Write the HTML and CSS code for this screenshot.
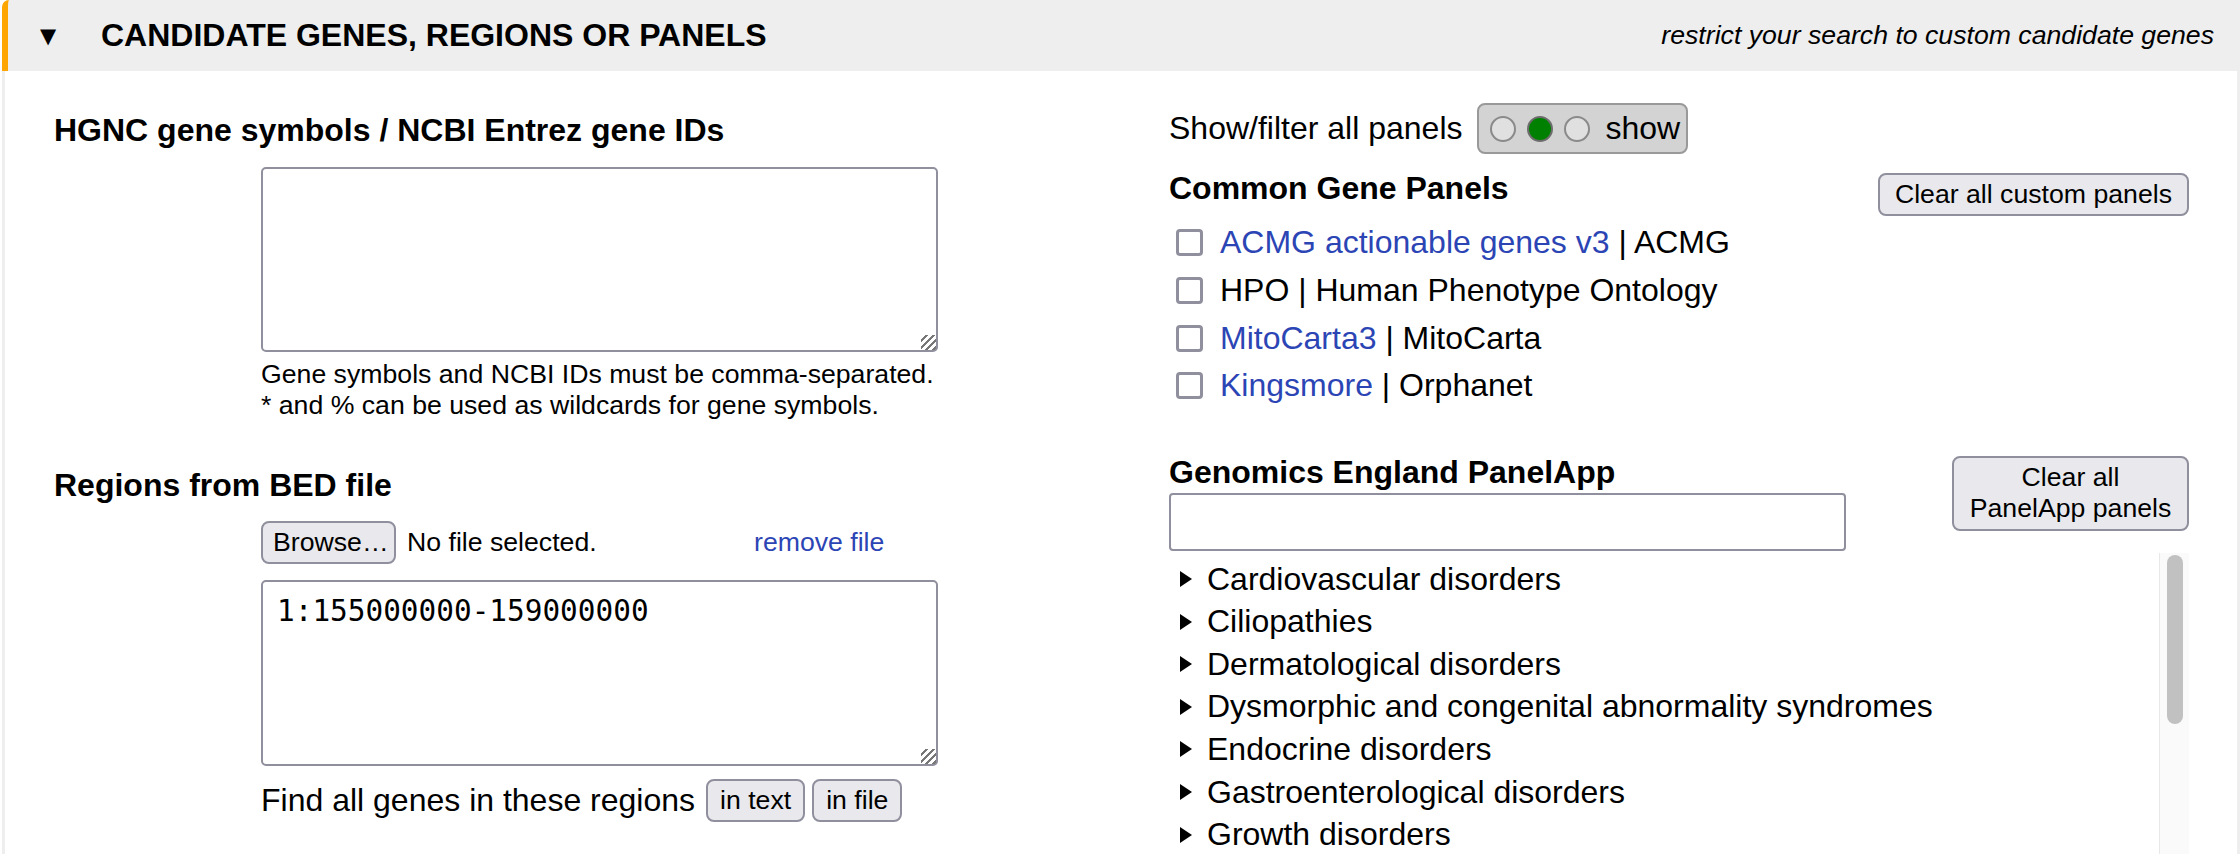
FILE: index.html
```html
<!DOCTYPE html>
<html lang="en">
<head>
<meta charset="utf-8">
<title>Candidate genes</title>
<link rel="stylesheet" href="styles.css">
</head>
<body>
<section class="panel">
  <header class="panel-head">
    <div class="head-left">
      <span class="caret">▼</span>
      <h2 class="head-title">CANDIDATE GENES, REGIONS OR PANELS</h2>
    </div>
    <div class="head-note">restrict your search to custom candidate genes</div>
  </header>
  <div class="panel-body">
    <div class="col-left">
      <h3 class="sub-title first">HGNC gene symbols / NCBI Entrez gene IDs</h3>
      <div class="indent">
        <textarea class="area"></textarea>
        <p class="help">Gene symbols and NCBI IDs must be comma-separated.<br>* and % can be used as wildcards for gene symbols.</p>
      </div>
      <h3 class="sub-title bed">Regions from BED file</h3>
      <div class="indent">
        <div class="file-row">
          <button class="btn">Browse…</button>
          <span class="file-name">No file selected.</span>
          <a class="link remove" href="#">remove file</a>
        </div>
        <textarea class="area mono">1:155000000-159000000</textarea>
        <div class="find-row">
          <span>Find all genes in these regions</span>
          <button class="btn">in text</button>
          <button class="btn">in file</button>
        </div>
      </div>
    </div>
    <div class="col-right">
      <div class="show-row">
        <span>Show/filter all panels</span>
        <div class="toggle">
          <span class="dot"></span>
          <span class="dot on"></span>
          <span class="dot"></span>
          <span class="toggle-label">show</span>
        </div>
      </div>
      <div class="common">
        <div class="common-main">
          <h3 class="sub-title">Common Gene Panels</h3>
          <ul class="checks">
            <li><input type="checkbox" class="chk"><a class="link" href="#">ACMG actionable genes v3</a>&nbsp;| ACMG</li>
            <li><input type="checkbox" class="chk">HPO | Human Phenotype Ontology</li>
            <li><input type="checkbox" class="chk"><a class="link" href="#">MitoCarta3</a>&nbsp;| MitoCarta</li>
            <li><input type="checkbox" class="chk"><a class="link" href="#">Kingsmore</a>&nbsp;| Orphanet</li>
          </ul>
        </div>
        <button class="btn clear-custom">Clear all custom panels</button>
      </div>
      <div class="panelapp">
        <div class="panelapp-main">
          <h3 class="sub-title">Genomics England PanelApp</h3>
          <input type="text" class="search">
        </div>
        <button class="btn clear-pa">Clear all PanelApp panels</button>
      </div>
      <div class="tree-box">
        <ul class="tree">
          <li><span class="tri"></span>Cardiovascular disorders</li>
          <li><span class="tri"></span>Ciliopathies</li>
          <li><span class="tri"></span>Dermatological disorders</li>
          <li><span class="tri"></span>Dysmorphic and congenital abnormality syndromes</li>
          <li><span class="tri"></span>Endocrine disorders</li>
          <li><span class="tri"></span>Gastroenterological disorders</li>
          <li><span class="tri"></span>Growth disorders</li>
        </ul>
        <div class="scrollbar"><div class="thumb"></div></div>
      </div>
    </div>
  </div>
</section>
</body>
</html>
```

FILE: styles.css
```css
html, body {
  margin: 0;
  padding: 0;
  height: 854px;
  overflow: hidden;
  background: #ffffff;
}
body {
  font-family: "Liberation Sans", Arial, sans-serif;
  font-size: 32px;
  color: #000;
}
.panel {
  margin-left: 2px;
}
.panel-head {
  height: 71px;
  box-sizing: border-box;
  background: #eeeeee;
  border-left: 6px solid #ffa500;
  border-top-left-radius: 7px;
  display: flex;
  align-items: center;
  justify-content: space-between;
  padding: 0 26px 0 32px;
}
.head-left {
  display: flex;
  align-items: center;
}
.caret {
  font-family: "DejaVu Sans", sans-serif;
  font-size: 21px;
  width: 61px;
  margin-top: 1px;
}
.head-title {
  margin: 0;
  font-size: 32px;
  font-weight: bold;
  line-height: 37px;
}
.head-note {
  font-style: italic;
  font-size: 26.67px;
}
.panel-body {
  border-left: 3px solid #eeeeee;
  border-right: 3px solid #eeeeee;
  display: grid;
  grid-template-columns: 1115px 1020px;
  padding: 32px 48px 0 49px;
  height: 783px;
  box-sizing: border-box;
}
.sub-title {
  margin: 0;
  font-size: 32px;
  font-weight: bold;
  line-height: 37px;
}
.sub-title.first {
  margin-top: 9px;
}
.sub-title.bed {
  margin-top: 46px;
}
.indent {
  margin-left: 207px;
}
.area {
  display: block;
  box-sizing: border-box;
  width: 677px;
  height: 185px;
  margin: 18px 0 0 0;
  border: 2px solid #8f8f9d;
  border-radius: 5px;
  padding: 12px 16px;
  font-family: "Liberation Sans", sans-serif;
  font-size: 26.67px;
  background: #fff;
  resize: both;
}
.area::-webkit-resizer {
  background: repeating-linear-gradient(135deg, transparent 0 3px, #777 3px 5px);
}
.area.mono {
  margin-top: 16px;
  height: 186px;
  font-family: "DejaVu Sans Mono", monospace;
  font-size: 29.4px;
  line-height: 36px;
  padding: 11px 14px;
  color: #000;
}
.help {
  margin: 7px 0 0 0;
  font-size: 26.67px;
  line-height: 31px;
}
.btn {
  font-family: "Liberation Sans", sans-serif;
  font-size: 26.67px;
  background: #e9e9ed;
  border: 2px solid #8f8f9d;
  border-radius: 8px;
  color: #000;
  padding: 0 10px;
  height: 43px;
  line-height: 37px;
}
.file-row {
  margin-top: 17px;
  display: flex;
  align-items: center;
  height: 43px;
}
.file-row .btn {
  width: 135px;
}
.file-name {
  font-size: 26.67px;
  margin-left: 11px;
  width: 347px;
}
.link {
  color: #2c45b5;
  text-decoration: none;
}
.remove {
  font-size: 26.67px;
}
.find-row {
  margin-top: 13px;
  display: flex;
  align-items: center;
  gap: 7px;
}
.find-row span {
  margin-right: 4px;
}
.find-row .btn {
  height: 43px;
  padding: 0 12px;
}

/* right column */
.show-row {
  display: flex;
  align-items: center;
  height: 51px;
}
.toggle {
  margin-left: 15px;
  box-sizing: border-box;
  height: 51px;
  width: 211px;
  background: #d3d3d3;
  border: 2px solid #999999;
  border-radius: 8px;
  display: flex;
  align-items: center;
  padding-left: 11px;
  gap: 11px;
}
.dot {
  width: 26px;
  height: 26px;
  box-sizing: border-box;
  border-radius: 50%;
  border: 2px solid #8a8a8a;
  background: #e0e0e0;
}
.dot.on {
  background: #008000;
  border-color: #6d6d6d;
}
.toggle-label {
  margin-left: 4px;
}
.common {
  margin-top: 16px;
  display: flex;
  justify-content: space-between;
  align-items: flex-start;
}
.clear-custom {
  margin-top: 3px;
  padding: 0 15px;
}
.checks {
  list-style: none;
  margin: 12px 0 0 0;
  padding: 0;
}
.checks li {
  height: 47.7px;
  display: flex;
  align-items: center;
}
.chk {
  appearance: none;
  -webkit-appearance: none;
  width: 27px;
  height: 27px;
  box-sizing: border-box;
  border: 3px solid #8f8f9d;
  border-radius: 4px;
  margin: 0 17px 0 7px;
  background: #fff;
}
.panelapp {
  margin-top: 44px;
  display: flex;
  justify-content: space-between;
  align-items: flex-start;
}
.search {
  display: block;
  box-sizing: border-box;
  width: 677px;
  height: 58px;
  margin-top: 2px;
  border: 2px solid #8f8f9d;
  border-radius: 4px;
  font-size: 26.67px;
}
.clear-pa {
  width: 237px;
  height: 75px;
  margin-top: 2px;
  line-height: 31px;
  padding: 0 14px;
}
.tree-box {
  margin-top: 2px;
  display: flex;
  height: 301px;
  overflow: hidden;
}
.tree {
  flex: 1;
  list-style: none;
  margin: 0;
  padding: 5px 0 0 0;
}
.tree li {
  height: 42.6px;
  display: flex;
  align-items: center;
  white-space: nowrap;
}
.tri {
  width: 0;
  height: 0;
  border-left: 12px solid #000;
  border-top: 8px solid transparent;
  border-bottom: 8px solid transparent;
  margin: 0 15px 0 11px;
}
.scrollbar {
  width: 30px;
  box-sizing: border-box;
  background: #fafafa;
  border-left: 1px solid #e8e8e8;
  padding: 2px 6px 0 7px;
}
.thumb {
  height: 169px;
  background: #c1c1c1;
  border-radius: 8px;
}
```
